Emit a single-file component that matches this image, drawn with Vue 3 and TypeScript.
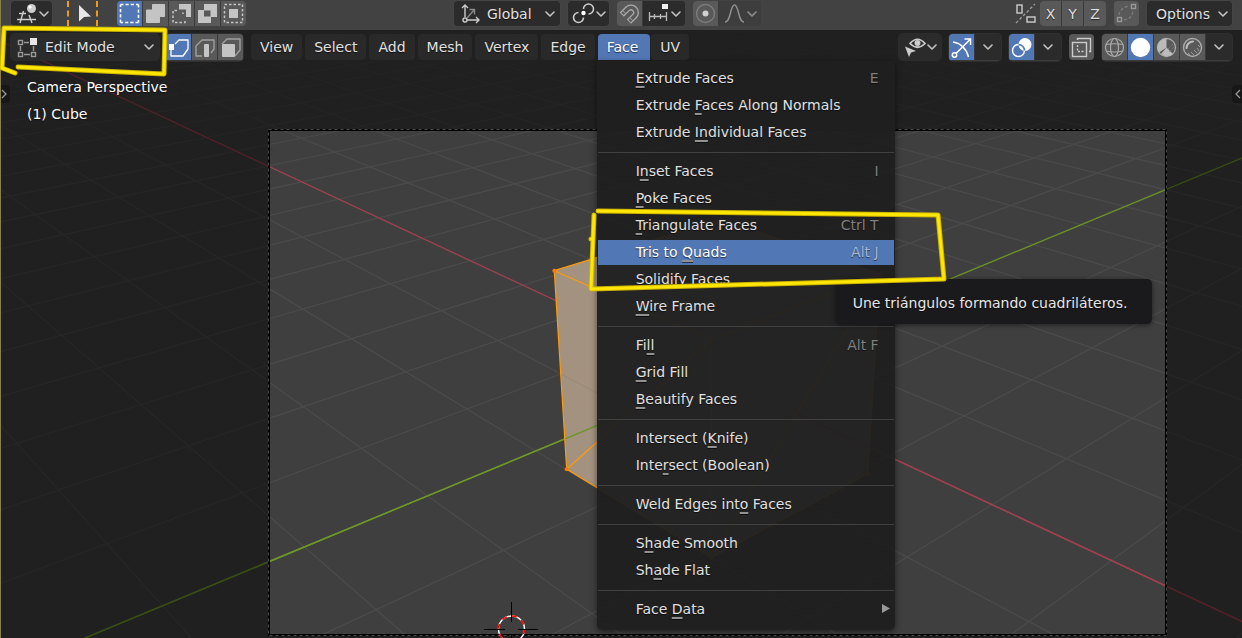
<script setup lang="ts">
import { ref } from 'vue'

type Vec3 = [number, number, number]
interface Segment { x1: number; y1: number; x2: number; y2: number }
interface MenuEntry { label: string; key?: number; keyLen?: number; shortcut?: string; submenu?: boolean; tip?: string }

// Scene camera: 50 mm lens, 36 mm sensor
const camera: Vec3 = [7.3589, -6.9258, 4.9583]
const right: Vec3 = [0.6859, 0.7277, 0]
const up: Vec3 = [-0.324, 0.3054, 0.8954]
const back: Vec3 = [0.6516, -0.6142, 0.4453]
const focal = 1245.8
const near = 0.6

const dot = (a: Vec3, b: Vec3) => a[0] * b[0] + a[1] * b[1] + a[2] * b[2]
const toCamera = (p: Vec3): Vec3 => {
  const d: Vec3 = [p[0] - camera[0], p[1] - camera[1], p[2] - camera[2]]
  return [dot(d, right), dot(d, up), -dot(d, back)]
}
const toScreen = (c: Vec3) => ({ x: 717.5 + (focal * c[0]) / c[2], y: 382.5 - (focal * c[1]) / c[2] })
const project = (p: Vec3) => toScreen(toCamera(p))

function segment(a: Vec3, b: Vec3): Segment | null {
  let ca = toCamera(a)
  let cb = toCamera(b)
  if (ca[2] < near && cb[2] < near) return null
  const clip = (inside: Vec3, out: Vec3): Vec3 => {
    const t = (near - out[2]) / (inside[2] - out[2])
    return [out[0] + (inside[0] - out[0]) * t, out[1] + (inside[1] - out[1]) * t, near]
  }
  if (ca[2] < near) ca = clip(cb, ca)
  if (cb[2] < near) cb = clip(ca, cb)
  const s = toScreen(ca)
  const e = toScreen(cb)
  return { x1: s.x, y1: s.y, x2: e.x, y2: e.y }
}

const grid: Segment[] = []
for (let i = -24; i <= 24; i++) {
  if (i === 0) continue
  for (const s of [segment([i, -24, 0], [i, 24, 0]), segment([-24, i, 0], [24, i, 0])]) {
    if (s) grid.push(s)
  }
}
const axisX = segment([-30, 0, 0], [8, 0, 0])
const axisY = segment([0, -10, 0], [0, 30, 0])
const axisXFront = segment([1, 0, 0], [8, 0, 0])
const axisYFront = segment([0, -10, 0], [0, -1, 0])
const contact = segment([-1, -1, 0], [1, -1, 0])

const corners: Record<string, Vec3> = {
  a: [-1, -1, 1], b: [1, -1, 1], c: [1, 1, 1], d: [-1, 1, 1],
  e: [-1, -1, -1], f: [1, -1, -1], g: [1, 1, -1],
}
const outline = ['a', 'd', 'c', 'g', 'f', 'e']
  .map((k) => { const p = project(corners[k]); return `${p.x},${p.y}` })
  .join(' ')
const edges = ['ab', 'bc', 'cd', 'da', 'ae', 'ef', 'fg', 'gc', 'bf', 'eb', 'fc']
  .map((k) => segment(corners[k[0]], corners[k[1]]))
const vertices = Object.values(corners).map(project)

const selectModes = ['set', 'extend', 'subtract', 'invert', 'intersect']
const meshModes = ['vertex', 'edge', 'face']
const shadings = ['wire', 'solid', 'material', 'rendered']
const selectMode = ref('set')
const meshMode = ref('vertex')
const shading = ref('solid')
const menus = ['View', 'Select', 'Add', 'Mesh', 'Vertex', 'Edge', 'Face', 'UV']
const openMenu = ref('Face')
const active = ref('Tris to Quads')

const faceMenu: MenuEntry[][] = [
  [
    { label: 'Extrude Faces', key: 0, shortcut: 'E' },
    { label: 'Extrude Faces Along Normals', key: 8 },
    { label: 'Extrude Individual Faces', key: 8, keyLen: 2 },
  ],
  [
    { label: 'Inset Faces', key: 1, shortcut: 'I' },
    { label: 'Poke Faces', key: 0 },
    { label: 'Triangulate Faces', key: 0, shortcut: 'Ctrl T' },
    { label: 'Tris to Quads', key: 8, shortcut: 'Alt J', tip: 'Une triángulos formando cuadriláteros.' },
    { label: 'Solidify Faces', key: 0 },
    { label: 'Wire Frame', key: 0 },
  ],
  [
    { label: 'Fill', key: 2, keyLen: 2, shortcut: 'Alt F' },
    { label: 'Grid Fill', key: 0 },
    { label: 'Beautify Faces', key: 0 },
  ],
  [
    { label: 'Intersect (Knife)', key: 11 },
    { label: 'Intersect (Boolean)', key: 4 },
  ],
  [{ label: 'Weld Edges into Faces', key: 14 }],
  [
    { label: 'Shade Smooth', key: 1 },
    { label: 'Shade Flat', key: 2 },
  ],
  [{ label: 'Face Data', key: 5, submenu: true }],
]
const parts = (m: MenuEntry) => {
  const k = m.key ?? 0
  const n = m.keyLen ?? 1
  return [m.label.slice(0, k), m.label.slice(k, k + n), m.label.slice(k + n)]
}
</script>

<template>
  <div class="editor">
    <svg class="defs" aria-hidden="true">
      <defs>
        <symbol id="chevron" viewBox="0 0 10 6"><path d="M1 1 5 5 9 1" fill="none" stroke="currentColor" stroke-width="1.6" stroke-linecap="round" stroke-linejoin="round" /></symbol>
        <symbol id="set" viewBox="0 0 25 25"><rect x="3.5" y="3.5" width="18" height="18" fill="none" stroke="currentColor" stroke-width="1.6" stroke-dasharray="3 2 3.2 2 3.2 2 2.6 0" /></symbol>
        <symbol id="extend" viewBox="0 0 25 25"><path d="M9.5 3.5H21.5V15.5H16.5V21.5H3.5V9H9.5Z" fill="currentColor" stroke="currentColor" stroke-linejoin="round" /></symbol>
        <symbol id="subtract" viewBox="0 0 25 25"><path d="M10 3H22V16H17V8.500H10Z" fill="currentColor" /><path d="M8 9.500H4V21.500H16V18M14 11.500V13" fill="none" stroke="currentColor" stroke-width="1.5" stroke-dasharray="2.500 2" /></symbol>
        <symbol id="invert" viewBox="0 0 25 25"><path fill-rule="evenodd" d="M9 3H22V16H16V22H3V9H9ZM9 9.500V15.500H15.500V9.500Z" fill="currentColor" /></symbol>
        <symbol id="intersect" viewBox="0 0 25 25"><rect x="3.5" y="3.5" width="18" height="18" fill="none" stroke="currentColor" stroke-width="1.5" stroke-dasharray="2.500 2" /><rect x="8" y="8" width="9" height="9" fill="currentColor" /></symbol>
        <symbol id="vertex" viewBox="0 0 25 25"><path d="M5 15V21H17L22 14V5H13L9 9" fill="none" stroke="currentColor" stroke-width="1.3" stroke-linejoin="round" /><rect x="3" y="9" width="5" height="6" fill="#fff" /></symbol>
        <symbol id="edge" viewBox="0 0 25 25"><path d="M10 21H4V11L10 5H22V14L19 18" fill="none" stroke="#a0a0a0" stroke-width="1.4" stroke-linejoin="round" /><rect x="12" y="9" width="5" height="13" rx="1" fill="currentColor" /></symbol>
        <symbol id="face" viewBox="0 0 25 25"><path d="M4 9 9 4H22V15L17 21" fill="none" stroke="#a0a0a0" stroke-width="1.4" stroke-linejoin="round" /><rect x="4" y="9" width="13" height="13" rx="1" fill="currentColor" /></symbol>
        <symbol id="wire" viewBox="0 0 25 25"><g fill="none" stroke="#aaa" stroke-width="1.2"><circle cx="12.500" cy="12.500" r="9" /><ellipse cx="12.500" cy="12.500" rx="4" ry="9" /><path d="M4 9.500Q12 8 21 9.500M4 16Q12 18 21 16" /></g></symbol>
        <symbol id="solid" viewBox="0 0 25 25"><circle cx="12.500" cy="12.500" r="9.700" fill="#fff" /></symbol>
        <symbol id="material" viewBox="0 0 25 25"><circle cx="12.500" cy="12.500" r="9" fill="none" stroke="#aaa" stroke-width="1.3" /><path d="M12.500 12.500V3.500A9 9 0 0 0 5 17.500ZM12.500 12.500 19 19A9 9 0 0 1 7 19Z" fill="#bbb" /><path d="M14 14 19 9M15 17 20 12" stroke="#888" stroke-dasharray="1 1" /></symbol>
        <symbol id="rendered" viewBox="0 0 25 25"><circle cx="12.500" cy="12.500" r="9" fill="none" stroke="#aaa" stroke-width="1.400" /><path d="M6.500 13A6.500 6.500 0 0 1 13 6.500" fill="none" stroke="#bbb" stroke-width="2.200" stroke-linecap="round" /><path d="M18 10 20 12M17 13 19 16M14 15 17 18M11 17 14 20M8 18 10 20" stroke="#999" /></symbol>
      </defs>
    </svg>

    <header class="topbar">
      <button class="box type" aria-label="Editor type">
        <svg class="glyph w28" viewBox="0 0 28 25" fill="none" stroke="#ccc" stroke-width="1.400"><path d="M8 12.500H15M6 18.500H25M12.500 10 9 22M18 14 21 22" /><circle cx="20.500" cy="7.500" r="4.500" fill="#ccc" stroke="none" /><circle cx="19" cy="6" r="1.600" fill="#fff" stroke="none" /></svg>
        <svg class="chev"><use href="#chevron" /></svg>
      </button>
      <button class="tool" aria-label="Tweak">
        <svg class="glyph w25" viewBox="0 0 25 25"><path d="M6 4V20.500L11 16 18 15.500Z" fill="#e6e6e6" /></svg>
      </button>
      <div class="group">
        <button v-for="m in selectModes" :key="m" class="cell" :class="{ on: selectMode === m }" :aria-label="m" @click="selectMode = m">
          <svg class="glyph w25"><use :href="'#' + m" /></svg>
        </button>
      </div>
      <span class="space-a"></span>
      <label class="picker global">
        <svg class="glyph lead" viewBox="0 0 28 25" fill="none" stroke="#ccc" stroke-width="1.400"><path d="M11 16V4M8 7 11 4 14 7M13 19H25M22 16 25 19 22 22" /><circle cx="11" cy="19" r="2" /><path d="M13 17 20 9M15.500 8.500H20.500V13.500" stroke="#888" /></svg>
        <select aria-label="Transform orientation"><option>Global</option><option>Local</option></select>
        <svg class="chev over"><use href="#chevron" /></svg>
      </label>
      <button class="box pivot" aria-label="Pivot point">
        <svg class="glyph w28" viewBox="0 0 28 25" fill="none" stroke="#ccc" stroke-width="1.600"><path d="M15.500 16.500A5 5 0 1 1 10.500 11.500M15.500 8A5 5 0 1 1 20.500 13" /><circle cx="15.500" cy="12" r="2.200" fill="#fff" stroke="none" /></svg>
        <svg class="chev"><use href="#chevron" /></svg>
      </button>
      <div class="group snap">
        <button class="cell" aria-label="Snap">
          <svg class="glyph w25" viewBox="0 0 25 25" fill="none"><g transform="translate(14 11.500) rotate(45)"><path d="M-5 8V0A5 5 0 0 1 5 0V8" stroke="#aaa" stroke-width="6" /><path d="M-5 7V0A5 5 0 0 1 5 0V7" stroke="#595959" stroke-width="3.400" /><path d="M-7.500 4.500H-2.500M2.500 4.500H7.500" stroke="#999" /></g></svg>
        </button>
        <button class="cell dark wide" aria-label="Snap to">
          <svg class="glyph w28" viewBox="0 0 28 25" fill="none" stroke="#bbb" stroke-width="1.300"><path d="M6 15.500H24M6.500 11V20M11.500 13V18M17.500 13V18M23.500 11V20" /><rect x="19" y="3" width="6" height="5" fill="#eee" stroke="none" /></svg>
          <svg class="chev"><use href="#chevron" /></svg>
        </button>
      </div>
      <div class="group">
        <button class="cell" aria-label="Proportional editing">
          <svg class="glyph w25" viewBox="0 0 25 25"><circle cx="12.500" cy="12.500" r="9" fill="none" stroke="#7c7c7c" stroke-width="1.400" /><circle cx="12.500" cy="12.500" r="3" fill="#d0d0d0" /></svg>
        </button>
        <button class="cell pale wide" aria-label="Falloff">
          <svg class="glyph w28" viewBox="0 0 28 25"><path d="M6 21C12 21 11 4 15.500 4S19 21 25 21" fill="none" stroke="#8f8f8f" stroke-width="1.500" /></svg>
          <svg class="chev"><use href="#chevron" /></svg>
        </button>
      </div>
      <span class="space-b"></span>
      <svg class="mirror" viewBox="0 0 22 25" fill="none" stroke="#ccc" stroke-width="1.400"><rect x="2" y="4" width="5" height="8" /><rect x="12" y="16" width="8" height="5" /><path d="M1 22 20 3" stroke="#999" stroke-dasharray="3 2" /></svg>
      <div class="group xyz">
        <button v-for="a in ['X', 'Y', 'Z']" :key="a" class="cell axis">{{ a }}</button>
      </div>
      <button class="cell lone" aria-label="Auto merge">
        <svg class="glyph w25" viewBox="0 0 25 25" fill="none" stroke="#999" stroke-width="1.400"><rect x="3.500" y="16.500" width="4" height="4" /><rect x="17.500" y="3.500" width="4" height="4" /><path d="M5 14Q6 7 15 5M10 19Q18 18 19 10" stroke="#7c7c7c" stroke-dasharray="3 2" /></svg>
      </button>
      <button class="box options">Options<svg class="chev"><use href="#chevron" /></svg></button>
    </header>

    <main class="viewport">
      <svg class="scene" viewBox="0 30 1242 608" preserveAspectRatio="xMidYMid slice" aria-hidden="true">
        <defs>
          <linearGradient id="fade" x1="0" y1="0" x2="0" y2="1"><stop offset="0" stop-color="#555" /><stop offset="0.250" stop-color="#fff" /></linearGradient>
          <mask id="far" maskUnits="userSpaceOnUse" x="0" y="30" width="1242" height="608"><rect y="30" width="1242" height="608" fill="url(#fade)" /></mask>
        </defs>
        <rect x="-2000" y="-2000" width="5242" height="4638" fill="#3f3f3f" />
        <g mask="url(#far)">
          <line v-for="(s, i) in grid" :key="i" v-bind="s" stroke="#4b4b4b" stroke-width="1.300" />
        </g>
        <line v-bind="axisX" stroke="#9c414f" stroke-width="1.400" />
        <line v-bind="axisY" stroke="#6b9029" stroke-width="1.400" />
        <polygon :points="outline" fill="#a39280" />
        <line v-bind="contact" stroke="#978876" />
        <line v-bind="axisXFront" stroke="#9c414f" stroke-width="1.400" />
        <line v-bind="axisYFront" stroke="#6f962a" stroke-width="1.400" />
        <line v-for="(e, i) in edges" :key="'e' + i" v-bind="e" stroke="#ff9a0a" stroke-width="1.200" />
        <circle v-for="(p, i) in vertices" :key="'v' + i" :cx="p.x" :cy="p.y" r="2" fill="#ff7a00" />
        <path fill-rule="evenodd" d="M-2000-2000H3242V2638H-2000ZM269 130V635H1166V130Z" fill="#000" fill-opacity="0.490" />
        <rect x="269" y="130" width="897" height="505" fill="none" stroke="#000" stroke-width="2" />
        <rect x="268.500" y="129.500" width="898" height="506" fill="none" stroke="#4a4a4a" stroke-dasharray="3 3" />
        <circle cx="511.500" cy="629" r="13" fill="none" stroke="#fff" stroke-width="1.400" />
        <circle cx="511.500" cy="629" r="13" fill="none" stroke="#f00" stroke-width="1.600" stroke-dasharray="5.100 5.100" />
        <path d="M511.500 602V622M484 629.500H505M518 629.500H538M511.500 635V656" stroke="#000" />
      </svg>

      <nav class="header">
        <label class="picker mode">
          <svg class="glyph lead" viewBox="0 0 28 25" fill="none" stroke="#999" stroke-width="1.400"><rect x="7.500" y="5.500" width="4" height="4" /><rect x="7.500" y="17.500" width="4" height="4" /><rect x="20.500" y="17.500" width="4" height="4" /><path d="M9.500 11V16M13 19.500H19M22.500 11V16M13 7.500H18" /><rect x="19" y="3" width="7" height="7" fill="#e6e6e6" stroke="none" /></svg>
          <select aria-label="Mode"><option>Edit Mode</option><option>Object Mode</option></select>
          <svg class="chev over"><use href="#chevron" /></svg>
        </label>
        <div class="group modes">
          <button v-for="m in meshModes" :key="m" class="cell" :class="{ on: meshMode === m }" :aria-label="m" @click="meshMode = m">
            <svg class="glyph w25"><use :href="'#' + m" /></svg>
          </button>
        </div>
        <div class="menus">
          <div v-for="m in menus" :key="m" class="slot">
            <button class="menu-button" :class="{ open: openMenu === m }" @click="openMenu = m">{{ m }}</button>
            <div v-if="m === 'Face' && openMenu === m" class="dropdown">
              <ul v-for="(section, i) in faceMenu" :key="i">
                <li v-for="item in section" :key="item.label">
                  <button class="item" :class="{ active: active === item.label }" @mouseenter="active = item.label">
                    <span>{{ parts(item)[0] }}<u>{{ parts(item)[1] }}</u>{{ parts(item)[2] }}</span>
                    <kbd v-if="item.shortcut">{{ item.shortcut }}</kbd>
                    <svg v-if="item.submenu" class="sub" viewBox="0 0 8 9"><path d="M0 0 8 4.500 0 9Z" fill="#999" /></svg>
                  </button>
                  <div v-if="item.tip && active === item.label" class="tooltip" role="tooltip">{{ item.tip }}</div>
                </li>
              </ul>
            </div>
          </div>
        </div>
        <div class="right">
          <button class="box visibility" aria-label="Visibility">
            <svg class="glyph w28" viewBox="0 0 28 25"><path d="M11 8.500Q18.500 0 26 8.500 18.500 16 11 8.500Z" fill="none" stroke="#ccc" stroke-width="1.700" /><circle cx="18.500" cy="8" r="3" fill="#ccc" /><path d="M6 11.500 10 22 12 17.500 17 16Z" fill="#ccc" /></svg>
            <svg class="chev"><use href="#chevron" /></svg>
          </button>
          <div class="group">
            <button class="cell on" aria-label="Gizmos">
              <svg class="glyph w25" viewBox="0 0 25 25" fill="none" stroke="#fff" stroke-width="1.500"><path d="M4 7Q16 9 19.500 22M7 18.500 21 4.500M15.500 4H21.500V10" /><circle cx="5.500" cy="20" r="2.200" /></svg>
            </button>
            <button class="cell dark drop" aria-label="Gizmo options"><svg class="chev"><use href="#chevron" /></svg></button>
          </div>
          <div class="group">
            <button class="cell on" aria-label="Overlays">
              <svg class="glyph w25" viewBox="0 0 25 25"><circle cx="16" cy="9.500" r="6.500" fill="#fff" /><circle cx="9.500" cy="15.500" r="6" fill="none" stroke="#fff" stroke-width="1.500" /><path d="M9.500 9.500A6 6 0 0 1 15.500 15.500" fill="none" stroke="#5277b5" stroke-width="1.700" /></svg>
            </button>
            <button class="cell dark drop" aria-label="Overlay options"><svg class="chev"><use href="#chevron" /></svg></button>
          </div>
          <button class="cell lone" aria-label="X-ray">
            <svg class="glyph w25" viewBox="0 0 25 25" fill="none" stroke="#ccc" stroke-width="1.400"><rect x="3.500" y="7.500" width="14" height="14" /><path d="M8.500 5V3.500H21.500V16.500H20" /><path d="M8.500 10V16.500H15" stroke-dasharray="2 1.500" /></svg>
          </button>
          <div class="group">
            <button v-for="s in shadings" :key="s" class="cell" :class="{ on: shading === s }" :aria-label="s" @click="shading = s">
              <svg class="glyph w25"><use :href="'#' + s" /></svg>
            </button>
            <button class="cell dark drop" aria-label="Shading options"><svg class="chev"><use href="#chevron" /></svg></button>
          </div>
        </div>
      </nav>

      <div class="info"><p>Camera Perspective</p><p>(1) Cube</p></div>
      <button class="tab left" aria-label="Show toolbar"><svg viewBox="0 0 6 10"><path d="M1 1 5 5 1 9" fill="none" stroke="#999" stroke-width="1.300" /></svg></button>
      <button class="tab end" aria-label="Show sidebar"><svg viewBox="0 0 6 10"><path d="M5 1 1 5 5 9" fill="none" stroke="#999" stroke-width="1.300" /></svg></button>
    </main>

    <svg class="marks" width="960" height="300" viewBox="0 0 960 300" fill="none" stroke-linecap="round" stroke-linejoin="round" aria-hidden="true">
      <g v-for="pen in [{ w: 5, c: '#c9b200' }, { w: 3, c: '#ffe600' }]" :key="pen.w" :stroke="pen.c" :stroke-width="pen.w">
        <path d="M15 73 2 68 4 28 165 30 164 74 18 67" />
        <path d="M598 211 938 215 944 279 591 289 594 215M591 239H592" />
      </g>
    </svg>
  </div>
</template>

<style>
html, body { margin: 0; background: #202020; }
</style>

<style scoped>
.editor { position: relative; display: flex; flex-direction: column; height: 100vh; overflow: hidden; color: #e0e0e0; font: 14px/20px "DejaVu Sans", sans-serif; text-shadow: 0 1px 1px rgba(0, 0, 0, 0.6); }
.editor::before { content: ""; position: absolute; z-index: 5; inset: 0 auto 0 0; width: 1px; background: #8b7f4c; }
.defs { position: absolute; width: 0; height: 0; }
button, select { margin: 0; padding: 0; border: 0; font: inherit; color: inherit; text-shadow: inherit; background: none; }
.topbar { display: flex; align-items: flex-start; flex: none; box-sizing: border-box; height: 30px; padding: 1px 10px 0 11px; background: #424242; }
.topbar .box, .topbar .cell, .topbar .picker { height: 25px; }
.box, .picker { display: flex; align-items: center; box-sizing: border-box; background: #2b2b2b; border-radius: 4px; box-shadow: 0 0 0 1px rgba(80, 80, 80, 0.25); }
.glyph { display: block; flex: none; height: 25px; }
.w25 { width: 25px; }
.w28 { width: 28px; }
.lead { position: absolute; left: 0; width: 28px; pointer-events: none; }
.chev { display: block; flex: none; width: 10px; height: 6px; color: #c4c4c4; }
.over { position: absolute; right: 5px; pointer-events: none; }
.type { width: 41px; }
.tool { box-sizing: content-box; width: 23px; height: 25px; margin: 0 19px 0 15px; padding-left: 4px; border: 2px dashed #ee9a1c; border-width: 0 2px; }
.group { display: flex; gap: 1px; border-radius: 4px; overflow: hidden; background: #3a3a3a; box-shadow: 0 0 0 1px rgba(70, 70, 70, 0.4); }
.cell { display: flex; align-items: center; justify-content: center; width: 25px; height: 26px; background: #595959; color: #c4c4c4; }
.cell.on { background: #5277b5; color: #fff; }
.cell.dark { background: #2b2b2b; }
.cell.wide { width: 42px; justify-content: flex-start; }
.cell.drop { width: 26px; }
.cell.pale { background: #3d3d3d; }
.cell.pale .chev { color: #8f8f8f; }
.cell.axis { width: 21px; color: #dedede; }
.cell.axis:last-child { width: 22px; }
.lone { border-radius: 4px; margin: 0 8px; }
.space-a { flex: 9 1 0; }
.space-b { flex: 11 1 0; }
.picker { position: relative; }
.picker select { width: 100%; height: 100%; appearance: none; outline: none; }
.global { width: 106px; }
.global select { padding-left: 33px; }
.pivot { width: 41px; margin: 0 8px; }
.snap { margin-right: 8px; }
.mirror { width: 22px; height: 25px; margin-right: 3px; }
.options { width: 85px; justify-content: space-between; padding: 0 4px 0 9px; }

.viewport { position: relative; flex: 1; min-height: 0; background: #202020; }
.scene { position: absolute; inset: 0; width: 100%; height: 100%; }
.header { position: relative; z-index: 2; display: flex; height: 31px; box-sizing: border-box; padding: 4px 10px 0 11px; background: rgba(31, 31, 31, 0.5); }
.header .box, .header .picker { height: 26px; }
.mode { width: 148px; margin-right: 7px; }
.mode select { padding-left: 34px; }
.modes { margin-right: 8px; }
.menus { display: flex; gap: 3px; }
.slot { position: relative; }
.menu-button { display: block; height: 26px; padding: 0 9px; background: #292929; border-radius: 4px; }
.menu-button.open { margin-right: -2px; padding-right: 12px; background: #5277b5; border-radius: 4px 4px 0 0; color: #fff; }
.right { display: flex; margin-left: auto; }
.right .group + .group { margin-left: 8px; }
.visibility { width: 42px; margin-right: 8px; }

.dropdown { position: absolute; top: 27px; left: -1px; box-sizing: border-box; width: 298px; padding: 5px 1px 8px; background: rgba(31, 31, 31, 0.955); border-radius: 0 0 5px 5px; box-shadow: 0 2px 6px rgba(0, 0, 0, 0.5); }
.dropdown ul { display: flex; flex-direction: column; gap: 2px; margin: 0; padding: 0; list-style: none; }
.dropdown ul + ul { margin-top: 7px; padding-top: 6px; border-top: 1px solid #414141; }
.dropdown li { position: relative; }
.item { display: flex; align-items: center; box-sizing: border-box; width: 100%; height: 25px; padding: 0 15px 2px 38px; white-space: nowrap; }
.item span { white-space: pre; }
.item u { text-decoration-thickness: 2px; text-underline-offset: 3px; text-decoration-color: #929292; text-decoration-skip-ink: none; }
.item kbd { margin-left: auto; font: inherit; color: #808080; }
.item.active { background: #5277b5; color: #fff; }
.item.active kbd { color: #a9b7d2; }
.sub { width: 8px; height: 9px; margin: 0 -11px 0 auto; }
.tooltip { position: absolute; z-index: 4; left: 238px; top: 39px; padding: 14px 25px 11px 17px; background: #1a1a1c; border-radius: 5px; white-space: nowrap; color: #e6e6e6; box-shadow: 0 1px 5px rgba(0, 0, 0, 0.5); }

.info { position: relative; padding: 13px 27px; color: #fff; line-height: 27px; }
.info p { margin: 0; }
.tab { position: absolute; top: 55px; display: flex; align-items: center; width: 10px; height: 18px; background: #171717; }
.tab svg { width: 6px; height: 10px; }
.left { left: 0; padding-left: 1px; border-radius: 0 4px 4px 0; }
.end { right: 0; padding-left: 3px; border-radius: 4px 0 0 4px; }
.marks { position: absolute; z-index: 6; top: 0; left: 0; pointer-events: none; }
</style>
